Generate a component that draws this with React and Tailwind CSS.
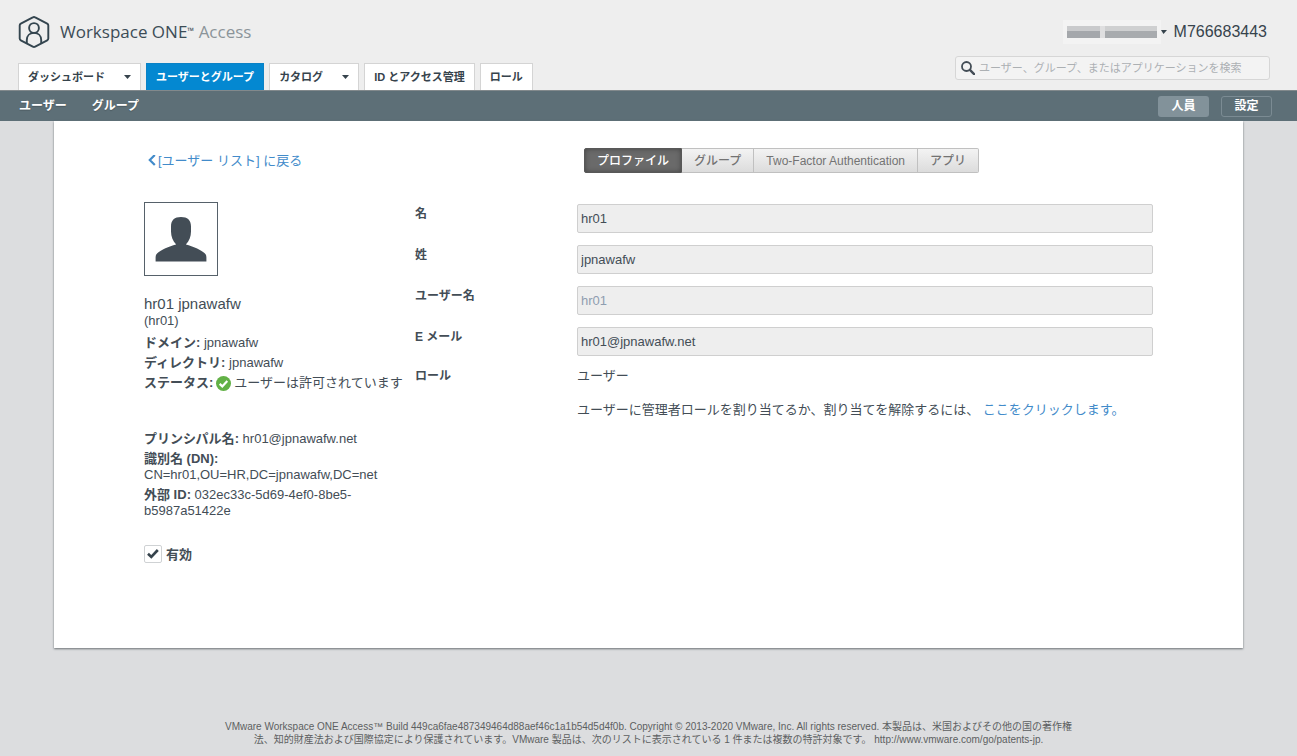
import React, { useState } from 'react';

const mainTabs = [
  { label: 'ダッシュボード', menu: true },
  { label: 'ユーザーとグループ', active: true },
  { label: 'カタログ', menu: true },
  { label: 'ID とアクセス管理' },
  { label: 'ロール' },
];

const profileTabs = ['プロファイル', 'グループ', 'Two-Factor Authentication', 'アプリ'];

const fields = [
  { id: 'firstName', label: '名', value: 'hr01' },
  { id: 'lastName', label: '姓', value: 'jpnawafw' },
  { id: 'userName', label: 'ユーザー名', value: 'hr01', disabled: true },
  { id: 'email', label: 'E メール', value: 'hr01@jpnawafw.net' },
];

const Caret = () => (
  <svg className="h-[4px] w-[7px]" viewBox="0 0 7 4" fill="currentColor" aria-hidden="true">
    <path d="M0 0h7L3.5 4z" />
  </svg>
);

const Logo = () => (
  <svg className="h-8 w-8 text-[#34454f]" viewBox="0 0 32 32" fill="none" stroke="currentColor" strokeWidth="1.9" strokeLinejoin="round" aria-hidden="true">
    <path d="M14.8 1.4a2.4 2.4 0 0 1 2.4 0l12 6.3a2 2 0 0 1 1.1 1.8v13a2 2 0 0 1-1.1 1.8l-12 6.3a2.4 2.4 0 0 1-2.4 0l-12-6.3a2 2 0 0 1-1.1-1.8v-13a2 2 0 0 1 1.1-1.8z" />
    <circle cx="16" cy="12" r="4.9" />
    <path d="M8.8 27.200v-3.200c0-4.300 3-7.100 7.200-7.100s7.200 2.800 7.200 7.100v3.200" />
  </svg>
);

const Avatar = () => (
  <div className="flex h-[74px] w-[74px] items-center justify-center border border-[#56616a] bg-white">
    <svg className="h-[46px] w-[52px] text-[#434d56]" viewBox="0 0 52 46" fill="currentColor" role="img" aria-label="hr01 jpnawafw">
      <path d="M26 1c6.500 0 10 3 10 9.500v5c0 5.500-2 9.500-5 12.700v.3C38 30.500 46 33.700 49.700 37.200c1.200 1.100 1.700 2.400 1.700 4v4.400H.6v-4.400c0-1.600.5-2.900 1.700-4C6 33.700 14 30.500 21 28.500v-.3c-3-3.200-5-7.200-5-12.700v-5C16 4 19.500 1 26 1z" />
    </svg>
  </div>
);

const StatusIcon = () => (
  <svg className="h-[15px] w-[15px]" viewBox="0 0 15 15" aria-hidden="true">
    <circle cx="7.500" cy="7.500" r="7.500" fill="#62b146" />
    <path d="M3.700 7.900l2.600 2.500 5-5.300" fill="none" stroke="#fff" strokeWidth="2.200" />
  </svg>
);

const Detail = ({ label, children }) => (
  <p>
    <strong>{label}:</strong> {children}
  </p>
);

const Header = () => (
  <header className="bg-[#eeeeee]">
    <div className="flex h-[90px] items-stretch justify-between pl-[18px] pr-[27px]">
      <div className="flex flex-col justify-between">
        <a href="#" className="mt-4 flex items-center gap-[10px] font-['Open_Sans'] text-[17px] leading-8 text-[#3c4c56]">
          <Logo />
          <span>Workspace ONE<sup className="text-[9px]">™</sup> <span className="text-[#8b9499]">Access</span></span>
        </a>
        <nav className="flex gap-[5px]">
          {mainTabs.map((tab) => (
            <a
              key={tab.label}
              href="#"
              className={
                tab.active
                  ? 'flex h-[27px] items-center border border-b-0 border-[#0a82c6] bg-[#0488d1] px-[9px] text-[11px] font-bold text-white'
                  : 'flex h-[27px] items-center gap-[19px] border border-b-0 border-[#d4d4d4] bg-white px-[9px] text-[11px] font-bold text-[#36434c]'
              }
            >
              {tab.label}
              {tab.menu && <Caret />}
            </a>
          ))}
        </nav>
      </div>

      <div className="flex flex-col items-end justify-between pb-[10px] pt-[20px]">
        <div className="flex items-center gap-[7px] pr-[3px] text-[#36434c]">
          <button type="button" aria-label="アカウント" className="flex items-center">
            {/* redacted account name */}
            <span className="flex h-[24px] items-center bg-[#f3f3f3] px-[4px]">
              <span className="h-[12px] w-[33px] bg-linear-to-b from-[#c9cacc] from-45% to-[#a4a7ab] to-45%" />
              <span className="h-[12px] w-[5px] bg-[#dfdfe0]" />
              <span className="h-[12px] w-[52px] bg-linear-to-b from-[#cfd0d1] from-45% to-[#a8abae] to-45%" />
            </span>
            <svg className="h-[4px] w-[6px]" viewBox="0 0 6 4" fill="currentColor" aria-hidden="true">
              <path d="M0 0h6L2.500 4z" />
            </svg>
          </button>
          <span className="text-[16px] leading-6">M766683443</span>
        </div>
        <label className="flex h-[24px] w-[315px] items-center gap-[4px] rounded-[3px] border border-[#d6d6d6] bg-[#f3f3f3] px-[5px]">
          <svg className="h-[14px] w-[14px] shrink-0 text-[#434d56]" viewBox="0 0 14 14" fill="none" stroke="currentColor" aria-hidden="true">
            <circle cx="5.500" cy="5.500" r="4.500" strokeWidth="1.800" />
            <path d="M8.900 8.900l4.200 4.200" strokeWidth="2.400" strokeLinecap="round" />
          </svg>
          <input
            type="search"
            aria-label="検索"
            placeholder="ユーザー、グループ、またはアプリケーションを検索"
            className="min-w-0 flex-1 bg-transparent text-[11px] leading-4 outline-none placeholder:text-[#acb0b3]"
          />
        </label>
      </div>
    </div>

    <div className="flex h-[31px] items-center justify-between border-t border-[#82898c] bg-[#5d6f77] pl-[19px] pr-[25px] text-[12px] font-bold text-white">
      <nav className="flex gap-[25px] text-shadow-xs">
        <a href="#">ユーザー</a>
        <a href="#">グループ</a>
      </nav>
      <div className="flex gap-[12px]">
        <button type="button" className="h-[21px] w-[51px] rounded-[3px] bg-[#82929a] leading-4">人員</button>
        <button type="button" className="h-[21px] w-[51px] rounded-[3px] border border-[#7b8b93] leading-4">設定</button>
      </div>
    </div>
  </header>
);

const UserSummary = ({ enabled, onToggle }) => (
  <aside className="leading-4">
    <Avatar />
    <h1 className="mt-[20px] text-[15px] leading-4">hr01 jpnawafw</h1>
    <p className="mt-px">(hr01)</p>
    <div className="mt-[6px] flex flex-col gap-[4px]">
      <Detail label="ドメイン">jpnawafw</Detail>
      <Detail label="ディレクトリ">jpnawafw</Detail>
      <p className="flex items-center gap-[3px] whitespace-nowrap">
        <strong>ステータス:</strong>
        <StatusIcon />
        ユーザーは許可されています
      </p>
    </div>
    <div className="mt-[40px] flex w-[240px] flex-col gap-[4px]">
      <Detail label="プリンシパル名">hr01@jpnawafw.net</Detail>
      <Detail label="識別名 (DN)"><br />CN=hr01,OU=HR,DC=jpnawafw,DC=net</Detail>
      <Detail label="外部 ID">032ec33c-5d69-4ef0-8be5-<wbr />b5987a51422e</Detail>
    </div>
    <label className="mt-[26px] flex items-end gap-[4px] font-bold">
      <span className="relative h-[18px] w-[18px]">
        <input
          type="checkbox"
          checked={enabled}
          onChange={onToggle}
          className="peer block h-[18px] w-[18px] appearance-none rounded-[2px] border border-[#cfd2d4] bg-white"
        />
        <svg className="pointer-events-none absolute inset-0 hidden h-[18px] w-[18px] text-[#36434c] peer-checked:block" viewBox="0 0 18 18" fill="none" stroke="currentColor" strokeWidth="2.600" aria-hidden="true">
          <path d="M4 8.800l3.300 3.200 6.500-7" />
        </svg>
      </span>
      有効
    </label>
  </aside>
);

const ProfileForm = () => (
  <form className="mt-[2px] grid grid-cols-[162px_minmax(0,1fr)] content-start gap-y-[12px] leading-4">
    {fields.map((field) => (
      <React.Fragment key={field.id}>
        <label htmlFor={field.id} className="pt-[2px] text-[12px] font-bold">{field.label}</label>
        <input
          id={field.id}
          type="text"
          defaultValue={field.value}
          disabled={field.disabled}
          readOnly
          className="h-[29px] w-full rounded-[2px] border border-[#cfcfcf] bg-[#eeeeee] px-[3px] disabled:text-[#8e9db0]"
        />
      </React.Fragment>
    ))}
    <span className="text-[12px] font-bold">ロール</span>
    <div>
      <p>ユーザー</p>
      <p className="mt-[18px]">
        ユーザーに管理者ロールを割り当てるか、割り当てを解除するには、{' '}
        <a href="#" className="text-[#428bca]">ここをクリックします。</a>
      </p>
    </div>
  </form>
);

const App = () => {
  const [activeTab, setActiveTab] = useState('プロファイル');
  const [enabled, setEnabled] = useState(true);

  return (
    <div className="flex min-h-screen flex-col bg-[#dcdddf] font-['Liberation_Sans','Noto_Sans_CJK_JP',sans-serif] text-[13px] text-[#434d56]">
      <Header />

      <main className="mx-[54px] flex-1 bg-white px-[90px] pt-[27px] shadow-[0_1px_2px_#6b7175]">
        <div className="grid grid-cols-[440px_minmax(0,1fr)] items-center">
          <a href="#" className="flex items-center gap-[2px] pl-[4px] leading-4 text-[#428bca]">
            <svg className="h-[12px] w-[8px]" viewBox="0 0 8 12" fill="none" stroke="currentColor" strokeWidth="2.200" aria-hidden="true">
              <path d="M6.800 0L1.800 5l5 5" />
            </svg>
            [ユーザー リスト] に戻る
          </a>
          <div role="tablist" className="flex">
            {profileTabs.map((tab) => (
              <button
                key={tab}
                type="button"
                role="tab"
                aria-selected={tab === activeTab}
                onClick={() => setActiveTab(tab)}
                className={
                  tab === activeTab
                    ? 'h-[25px] border border-[#585858] bg-[#6a6a6a] px-[12px] text-[12px] font-medium leading-4 text-white inset-shadow-[0_0_5px_#444444] first:rounded-l-[2px]'
                    : 'h-[25px] border border-l-0 border-[#c0c0c0] bg-linear-to-b from-[#f3f3f3] to-[#dcdcdc] px-[12px] text-[12px] font-medium leading-4 text-[#737373] last:rounded-r-[2px]'
                }
              >
                {tab}
              </button>
            ))}
          </div>
        </div>

        <div className="mt-[29px] grid grid-cols-[271px_minmax(0,1fr)]">
          <UserSummary enabled={enabled} onToggle={() => setEnabled(!enabled)} />
          <ProfileForm />
        </div>
      </main>

      <footer className="mx-auto mt-[72px] w-[850px] max-w-full pb-[10px] text-center text-[10px] leading-[13px] text-[#5c5f61]">
        VMware Workspace ONE Access™ Build 449ca6fae487349464d88aef46c1a1b54d5d4f0b. Copyright © 2013-2020 VMware, Inc. All rights reserved. 本製品は、米国およびその他の国の著作権法、知的財産法および国際協定により保護されています。VMware 製品は、次のリストに表示されている 1 件または複数の特許対象です。 http://www.vmware.com/go/patents-jp.
      </footer>
    </div>
  );
};

export default App;
